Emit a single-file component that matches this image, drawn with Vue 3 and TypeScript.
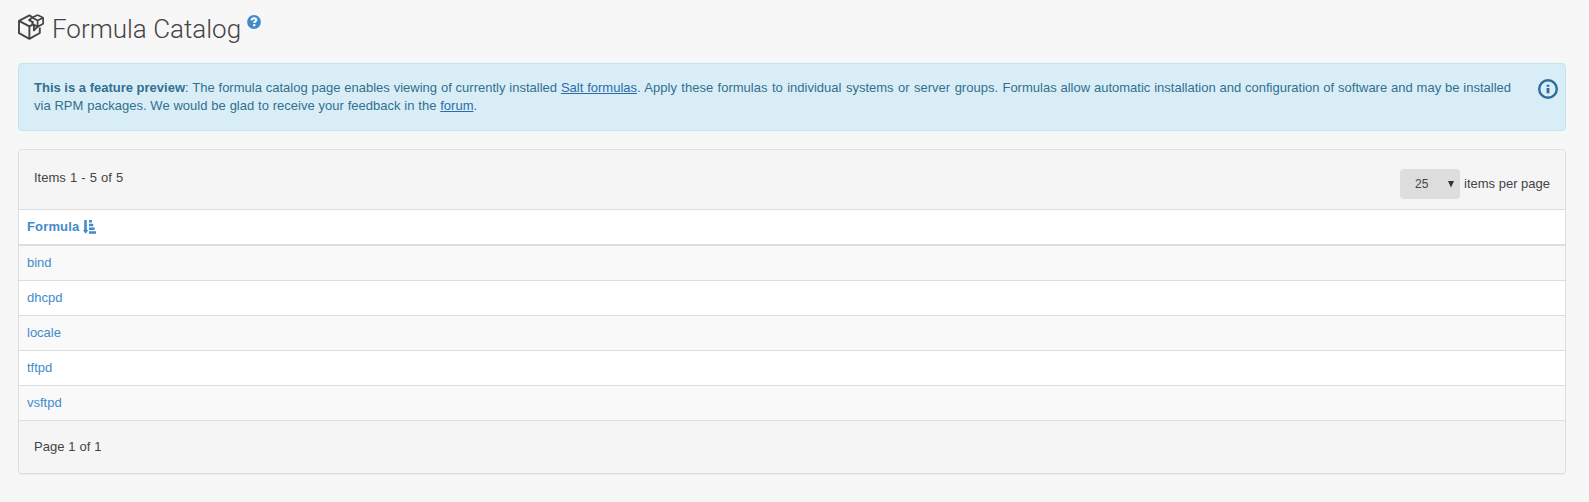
<script setup lang="ts">
const formulas: string[] = ['bind', 'dhcpd', 'locale', 'tftpd', 'vsftpd']
</script>

<template>
  <main class="page">
    <h1 class="title">
      <svg class="boxes" viewBox="0 0 27 27" fill="none" stroke="currentColor" stroke-width="1.9" stroke-linejoin="round">
        <path d="M14.5 3.2 11.4 1.4 1 6.8v12.4l10.4 5.6L21.8 19v-5.4M1 6.8l10.4 5.6v12.4M11.4 12.4l4.2-2.2" />
        <path d="m19.6 1 5.5 2.7v6l-5.5 3-5.3-3V7.2M13.9 3.7 19.6 1M14.3 3.7l5.3 2.7 5.5-2.7M19.6 6.4v6.3" stroke-width="1.7" />
        <path d="m14.3 3.6-3.2 2.5 4.5 2.4M15.9 10.8v5.6l4-4" />
      </svg>
      <span class="title-text">Formula Catalog</span>
      <svg class="help" viewBox="0 0 14 14">
        <circle cx="7" cy="7" r="6.9" fill="#428bca" />
        <path d="M4.6 5.3C4.8 3.8 5.8 3.2 7.1 3.2c1.3 0 2.2.7 2.2 1.8C9.3 6.4 7.2 6.4 7.2 8.1" fill="none" stroke="#fff" stroke-width="2.1" />
        <path d="M6.1 9.1h2.2v2.2H6.1z" fill="#fff" />
      </svg>
    </h1>

    <section class="alert">
      <p class="alert-text">
        <strong>This is a feature preview</strong>: The formula catalog page enables viewing of currently installed <a href="#">Salt formulas</a><span class="loose">. Apply these formulas to individual systems or server groups. </span>Formulas allow automatic installation and configuration of software and may be installed via RPM packages. We would be glad to receive your feedback in the <a href="#">forum</a>.
      </p>
      <svg class="info" viewBox="0 0 20 20">
        <circle cx="10" cy="10" r="8.8" fill="none" stroke="#2d6a9f" stroke-width="2.4" />
        <path d="M8.6 5.8h2.8v2H8.6zM8.6 9h2.8v5.2H8.6z" fill="#2d6a9f" />
      </svg>
    </section>

    <section class="panel">
      <header class="panel-head">
        <span class="count">Items 1 - 5 of 5</span>
        <div class="pager">
          <div class="select">
            <span>25</span>
            <svg class="caret" viewBox="0 0 6 7"><path d="M0 0h6L3 6.5z" fill="#333" /></svg>
          </div>
          <span>items per page</span>
        </div>
      </header>
      <div class="row column-head">
        <a href="#">Formula</a>
        <svg class="sort" viewBox="0 0 13 14" fill="#428bca">
          <path d="M1.2 0h2.6v10h1.6L2.6 13.7 0 10h1.2zM6 0h3v2.4H6zM6 3.8h4.2v2.4H6zM6 7.6h5.6v2.4H6zM6 11.3h7v2.5H6z" />
        </svg>
      </div>
      <div v-for="name in formulas" :key="name" class="row item">
        <a href="#">{{ name }}</a>
      </div>
      <footer class="panel-foot">Page 1 of 1</footer>
    </section>
  </main>
</template>

<style>
body {
  background: #f7f7f7;
}
</style>

<style scoped>
.page {
  box-sizing: border-box;
  min-height: 502px;
  padding: 14px 23px 0 18px;
  background: #f7f7f7;
  color: #444;
  font: 13px/18px "Liberation Sans", Arial, sans-serif;
}
.title {
  display: flex;
  align-items: flex-start;
  height: 49px;
  margin: 0;
  color: #444;
  font: 300 26px/30px Roboto, sans-serif;
}
.boxes {
  width: 27px;
  height: 27px;
  margin-right: 7px;
}
.help {
  width: 14px;
  height: 14px;
  margin: 1px 0 0 6px;
}
.alert {
  box-sizing: border-box;
  display: flex;
  height: 68px;
  padding: 15px 7px 0 15px;
  border: 1px solid #bce8f1;
  border-radius: 4px;
  background: #d9edf7;
  color: #31708f;
}
.alert-text {
  flex: 1;
  margin: 0;
  word-spacing: 0.25px;
}
.alert-text strong {
  word-spacing: 0;
}
.alert-text .loose {
  word-spacing: 0.85px;
}
.alert-text a {
  color: #2a6ca8;
  text-decoration: underline;
}
.info {
  width: 20px;
  height: 20px;
  margin-left: 25px;
}
.panel {
  margin-top: 18px;
  border: 1px solid #ddd;
  border-radius: 4px;
  background: #fff;
  box-shadow: 0 1px 1px rgba(0, 0, 0, 0.05);
  overflow: hidden;
}
.panel-head {
  display: flex;
  justify-content: space-between;
  height: 40px;
  padding: 19px 15px 0;
  border-bottom: 1px solid #ddd;
  background: #f5f5f5;
}
.count {
  word-spacing: 0.5px;
}
.pager {
  display: flex;
  align-items: center;
  gap: 4px;
  height: 30px;
}
.select {
  box-sizing: border-box;
  display: flex;
  align-items: center;
  justify-content: space-between;
  width: 60px;
  height: 30px;
  padding: 0 6px 0 15px;
  border-radius: 4px;
  background: #ddd;
  font-size: 12px;
}
.caret {
  width: 6px;
  height: 7px;
}
.row {
  display: flex;
  align-items: center;
  height: 34px;
  padding: 0 8px;
  border-bottom: 1px solid #ddd;
}
.row a {
  color: #428bca;
  text-decoration: none;
}
.column-head {
  border-bottom-width: 2px;
  font-weight: bold;
  letter-spacing: 0.15px;
}
.sort {
  width: 13px;
  height: 14px;
  margin-left: 4px;
}
.item:nth-child(odd) {
  background: #f9f9f9;
}
.panel-foot {
  height: 35px;
  padding: 17px 15px 0;
  background: #f5f5f5;
  word-spacing: 0.35px;
}
</style>
